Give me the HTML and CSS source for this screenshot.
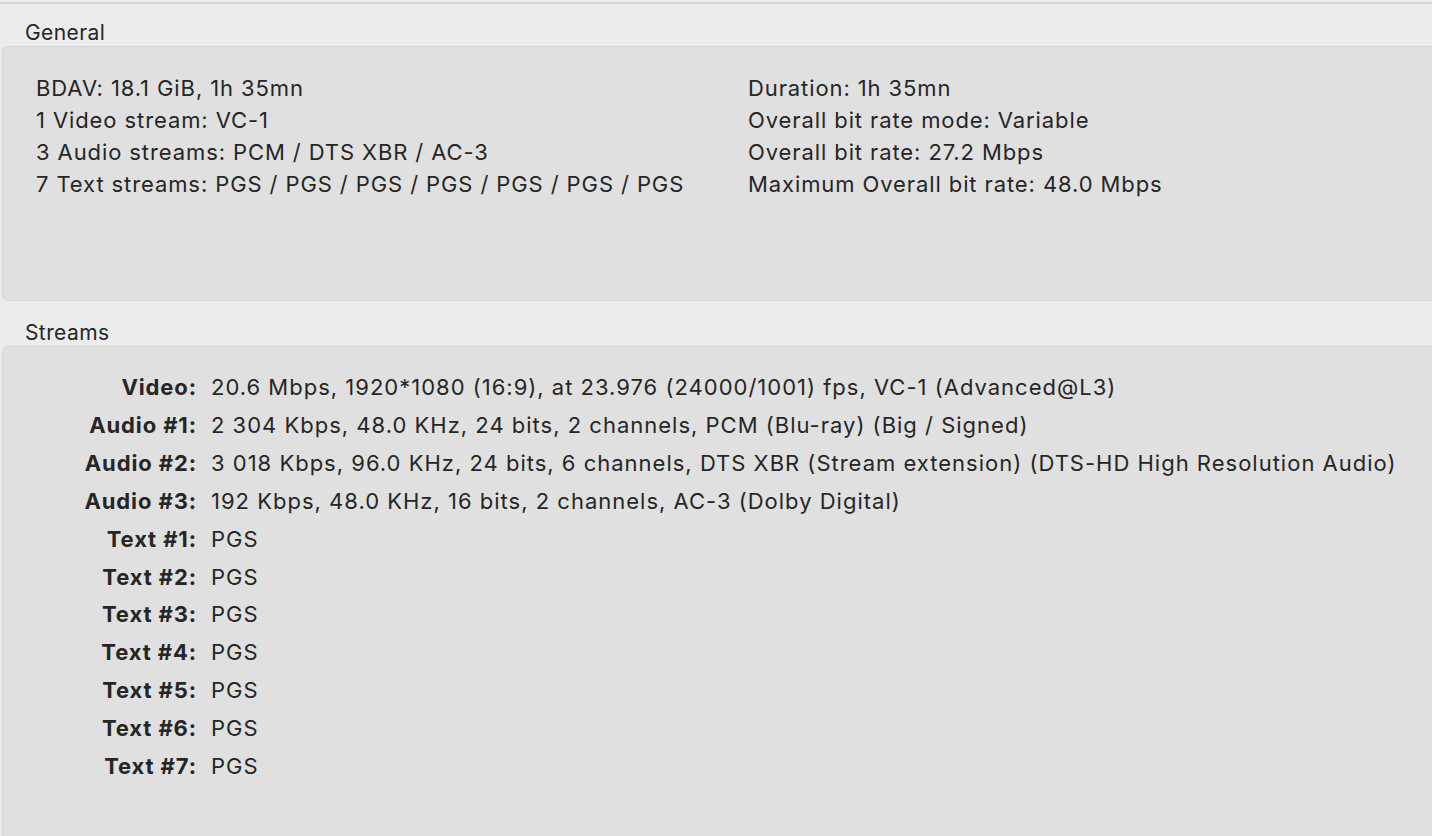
FILE: index.html
```html
<!DOCTYPE html>
<html lang="en">
<head>
    <meta charset="UTF-8">
    <title>MediaInfo</title>
    <link rel="stylesheet" href="styles.css">
</head>
<body>
    <div class="topline"></div>

    <div class="section-title">General</div>
    <div class="panel general">
        <div class="col">
            <div>BDAV: 18.1 GiB, 1h 35mn</div>
            <div>1 Video stream: VC-1</div>
            <div>3 Audio streams: PCM / DTS XBR / AC-3</div>
            <div>7 Text streams: PGS / PGS / PGS / PGS / PGS / PGS / PGS</div>
        </div>
        <div class="col">
            <div>Duration: 1h 35mn</div>
            <div>Overall bit rate mode: Variable</div>
            <div>Overall bit rate: 27.2 Mbps</div>
            <div>Maximum Overall bit rate: 48.0 Mbps</div>
        </div>
    </div>

    <div class="section-title second">Streams</div>
    <div class="panel streams">
        <div class="label">Video:</div><div class="value">20.6 Mbps, 1920*1080 (16:9), at 23.976 (24000/1001) fps, VC-1 (Advanced@L3)</div>
        <div class="label">Audio #1:</div><div class="value">2 304 Kbps, 48.0 KHz, 24 bits, 2 channels, PCM (Blu-ray) (Big / Signed)</div>
        <div class="label">Audio #2:</div><div class="value">3 018 Kbps, 96.0 KHz, 24 bits, 6 channels, DTS XBR (Stream extension) (DTS-HD High Resolution Audio)</div>
        <div class="label">Audio #3:</div><div class="value">192 Kbps, 48.0 KHz, 16 bits, 2 channels, AC-3 (Dolby Digital)</div>
        <div class="label">Text #1:</div><div class="value">PGS</div>
        <div class="label">Text #2:</div><div class="value">PGS</div>
        <div class="label">Text #3:</div><div class="value">PGS</div>
        <div class="label">Text #4:</div><div class="value">PGS</div>
        <div class="label">Text #5:</div><div class="value">PGS</div>
        <div class="label">Text #6:</div><div class="value">PGS</div>
        <div class="label">Text #7:</div><div class="value">PGS</div>
    </div>
</body>
</html>
```

FILE: styles.css
```css
body {
    margin: 0;
    padding-top: 2px;
    background-color: #ececec;
    color: #262626;
    font-family: Inter, "Liberation Sans", sans-serif;
    font-size: 22px;
    letter-spacing: 0.9px;
    overflow: hidden;
    height: 836px;
}
.topline {
    height: 2px;
    background-color: #d5d5d5;
}
.section-title {
    padding: 16px 0 0 25px;
    height: 26px;
    line-height: 26px;
    font-size: 21px;
    letter-spacing: 0.4px;
}
.section-title.second {
    margin-top: 3px;
}
.panel {
    margin-left: 2px;
    margin-right: -20px;
    background-color: #e0e0e0;
    border: 1px solid #d6d6d6;
    border-radius: 6px;
}
.general {
    height: 255px;
    box-sizing: border-box;
    display: grid;
    grid-template-columns: 712px 1fr;
    padding: 25px 0 0 33px;
    line-height: 32px;
}
.streams {
    height: 500px;
    display: grid;
    grid-template-columns: 160px 1fr;
    column-gap: 14px;
    align-content: start;
    padding: 22px 0 0 34px;
    line-height: 37.9px;
}
.label {
    text-align: right;
    font-weight: 700;
}
.value {
    white-space: nowrap;
    letter-spacing: 1px;
}
```
